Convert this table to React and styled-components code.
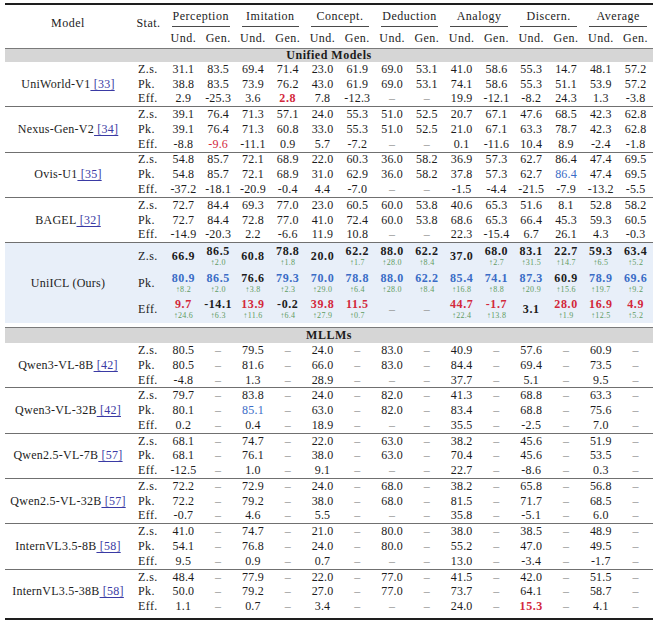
import React from 'react';
import styled, { createGlobalStyle } from 'styled-components';

const GlobalStyle = createGlobalStyle`
  html, body {
    margin: 0;
    padding: 0;
    background: #ffffff;
  }
  body {
    font-family: "Liberation Serif", "Times New Roman", serif;
    color: #1c1c1c;
  }
`;

const COLUMNS = '126px 35px repeat(14, 1fr)';
const ROW_H = 14.78;
const WIDE_ROW_H = 26.67;

const GROUPS = ['Perception', 'Imitation', 'Concept.', 'Deduction', 'Analogy', 'Discern.', 'Average'];
const STATS = ['Z.s.', 'Pk.', 'Eff.'];

const TONES = {
  b: '#3a6cc6',
  r: '#d3283b',
};

const Sheet = styled.div`
  width: 648px;
  margin: 3px 0 0 5px;
  border-top: 2px solid #1e1e1e;
  border-bottom: 2px solid #1e1e1e;
`;

const HeaderGrid = styled.div`
  display: grid;
  grid-template-columns: ${COLUMNS};
  grid-template-rows: 22px 21px;
  font-size: 12px;
  letter-spacing: 0.5px;
`;

const CornerLabel = styled.div`
  grid-row: 1 / 3;
  grid-column: ${p => p.$col};
  display: flex;
  align-items: center;
  justify-content: center;
  padding-bottom: 6px;
`;

const GroupLabel = styled.div`
  position: relative;
  grid-row: 1;
  grid-column: span 2;
  display: flex;
  align-items: center;
  justify-content: center;

  &::after {
    content: '';
    position: absolute;
    left: 6px;
    right: 6px;
    bottom: 0;
    height: 1px;
    background: #4a4a4a;
  }
`;

const SubLabel = styled.div`
  grid-row: 2;
  display: flex;
  align-items: center;
  justify-content: center;
  padding-top: 2px;
`;

const Band = styled.div`
  height: ${p => p.$h}px;
  border-top: 1px solid #7a7a7a;
  background: #d6d6d6;
  display: flex;
  align-items: center;
  justify-content: center;
  font-size: 12px;
  font-weight: 700;
  letter-spacing: 0.5px;
`;

const ModelGroup = styled.div`
  display: grid;
  grid-template-columns: ${COLUMNS};
  grid-template-rows: repeat(3, ${p => p.$rowH}px);
  background: ${p => (p.$highlight ? '#e8eff9' : 'transparent')};
  border-bottom: ${p => (p.$last ? 'none' : '1px solid #707070')};
  margin-bottom: ${p => (p.$last ? '4px' : '0')};
`;

const ModelName = styled.div`
  grid-column: 1;
  grid-row: 1 / 4;
  display: flex;
  align-items: center;
  justify-content: center;
  font-size: 12px;
  letter-spacing: 0.25px;
  white-space: nowrap;
`;

const Cite = styled.span`
  color: #3a3aa4;
  text-decoration: underline;
  text-decoration-thickness: 1px;
  text-underline-offset: 2px;
`;

const StatLabel = styled.div`
  grid-column: 2;
  display: flex;
  align-items: center;
  padding-left: 7px;
  font-size: 12px;
  letter-spacing: 0.4px;
`;

const Cell = styled.div`
  display: flex;
  flex-direction: column;
  align-items: center;
  justify-content: center;
  font-size: 12px;
`;

const Value = styled.span`
  line-height: 13px;
  color: ${p => (p.$dash ? '#8f8f8f' : p.$tone ? TONES[p.$tone] : '#1c1c1c')};
  font-weight: ${p => (p.$bold ? 700 : 400)};
  letter-spacing: ${p => (p.$bold ? '0.6px' : '0.2px')};
`;

const Delta = styled.span`
  font-size: 8px;
  line-height: 10px;
  color: #5f9b62;
  letter-spacing: 0.3px;
`;

// token: value[!x bold tone | ~x plain tone][^delta]
const parseCell = token => {
  const [main, delta] = token.split('^');
  const m = main.match(/^(.*?)([!~])([br])$/);
  if (m) return { text: m[1], tone: m[3], bold: m[2] === '!', delta };
  return { text: main, tone: null, bold: false, delta };
};

const undOnly = line =>
  line
    .split(' ')
    .map(v => `${v} -`)
    .join(' ');

const UNIFIED = [
  {
    name: 'UniWorld-V1',
    cite: '33',
    rows: [
      '31.1 83.5 69.4 71.4 23.0 61.9 69.0 53.1 41.0 58.6 55.3 14.7 48.1 57.2',
      '38.8 83.5 73.9 76.2 43.0 61.9 69.0 53.1 74.1 58.6 55.3 51.1 53.9 57.2',
      '2.9 -25.3 3.6 2.8!r 7.8 -12.3 - - 19.9 -12.1 -8.2 24.3 1.3 -3.8',
    ],
  },
  {
    name: 'Nexus-Gen-V2',
    cite: '34',
    rows: [
      '39.1 76.4 71.3 57.1 24.0 55.3 51.0 52.5 20.7 67.1 47.6 68.5 42.3 62.8',
      '39.1 76.4 71.3 60.8 33.0 55.3 51.0 52.5 21.0 67.1 63.3 78.7 42.3 62.8',
      '-8.8 -9.6~r -11.1 0.9 5.7 -7.2 - - 0.1 -11.6 10.4 8.9 -2.4 -1.8',
    ],
  },
  {
    name: 'Ovis-U1',
    cite: '35',
    rows: [
      '54.8 85.7 72.1 68.9 22.0 60.3 36.0 58.2 36.9 57.3 62.7 86.4 47.4 69.5',
      '54.8 85.7 72.1 68.9 31.0 62.9 36.0 58.2 37.8 57.3 62.7 86.4~b 47.4 69.5',
      '-37.2 -18.1 -20.9 -0.4 4.4 -7.0 - - -1.5 -4.4 -21.5 -7.9 -13.2 -5.5',
    ],
  },
  {
    name: 'BAGEL',
    cite: '32',
    rows: [
      '72.7 84.4 69.3 77.0 23.0 60.5 60.0 53.8 40.6 65.3 51.6 8.1 52.8 58.2',
      '72.7 84.4 72.8 77.0 41.0 72.4 60.0 53.8 68.6 65.3 66.4 45.3 59.3 60.5',
      '-14.9 -20.3 2.2 -6.6 11.9 10.8 - - 22.3 -15.4 6.7 26.1 4.3 -0.3',
    ],
  },
];

const OURS = {
  name: 'UniICL (Ours)',
  rows: [
    '66.9 86.5^2.0 60.8 78.8^1.8 20.0 62.2^1.7 88.0^28.0 62.2^8.4 37.0 68.0^2.7 83.1^31.5 22.7^14.7 59.3^6.5 63.4^5.2',
    '80.9!b^8.2 86.5!b^2.0 76.6^3.8 79.3!b^2.3 70.0!b^29.0 78.8!b^6.4 88.0!b^28.0 62.2!b^8.4 85.4!b^16.8 74.1!b^8.8 87.3!b^20.9 60.9^15.6 78.9!b^19.7 69.6!b^9.2',
    '9.7!r^24.6 -14.1^6.3 13.9!r^11.6 -0.2^6.4 39.8!r^27.9 11.5!r^0.7 - - 44.7!r^22.4 -1.7!r^13.8 3.1 28.0!r^1.9 16.9!r^12.5 4.9!r^5.2',
  ],
};

const MLLMS = [
  {
    name: 'Qwen3-VL-8B',
    cite: '42',
    rows: [
      '80.5 79.5 24.0 83.0 40.9 57.6 60.9',
      '80.5 81.6 66.0 83.0 84.4 69.4 73.5',
      '-4.8 1.3 28.9 - 37.7 5.1 9.5',
    ],
  },
  {
    name: 'Qwen3-VL-32B',
    cite: '42',
    rows: [
      '79.7 83.8 24.0 82.0 41.3 68.8 63.3',
      '80.1 85.1~b 63.0 82.0 83.4 68.8 75.6',
      '0.2 0.4 18.9 - 35.5 -2.5 7.0',
    ],
  },
  {
    name: 'Qwen2.5-VL-7B',
    cite: '57',
    rows: [
      '68.1 74.7 22.0 63.0 38.2 45.6 51.9',
      '68.1 76.1 38.0 63.0 70.4 45.6 53.5',
      '-12.5 1.0 9.1 - 22.7 -8.6 0.3',
    ],
  },
  {
    name: 'Qwen2.5-VL-32B',
    cite: '57',
    rows: [
      '72.2 72.9 24.0 68.0 38.2 65.8 56.8',
      '72.2 79.2 38.0 68.0 81.5 71.7 68.5',
      '-0.7 4.6 5.5 - 35.8 -5.1 6.0',
    ],
  },
  {
    name: 'InternVL3.5-8B',
    cite: '58',
    rows: [
      '41.0 74.7 21.0 80.0 38.0 38.5 48.9',
      '54.1 76.8 24.0 80.0 55.2 47.0 49.5',
      '9.5 0.9 0.7 - 13.0 -3.4 -1.7',
    ],
  },
  {
    name: 'InternVL3.5-38B',
    cite: '58',
    rows: [
      '48.4 77.9 22.0 77.0 41.5 42.0 51.5',
      '50.0 79.2 27.0 77.0 73.7 64.1 58.7',
      '1.1 0.7 3.4 - 24.0 15.3!r 4.1',
    ],
  },
].map(m => ({ ...m, rows: m.rows.map(undOnly) }));

const DataCell = ({ token, strong }) => {
  const cell = parseCell(token);
  const dash = cell.text === '-';
  return (
    <Cell>
      <Value $dash={dash} $tone={cell.tone} $bold={!dash && (cell.bold || strong)}>
        {dash ? '\u2013' : cell.text}
      </Value>
      {cell.delta && <Delta>{'\u2191' + cell.delta}</Delta>}
    </Cell>
  );
};

const Group = ({ model, last, highlight }) => (
  <ModelGroup $rowH={highlight ? WIDE_ROW_H : ROW_H} $last={last} $highlight={highlight}>
    <ModelName>
      {model.name}
      {model.cite && <Cite>{'\u00a0[' + model.cite + ']'}</Cite>}
    </ModelName>
    {model.rows.map((line, r) => (
      <React.Fragment key={r}>
        <StatLabel>{STATS[r]}</StatLabel>
        {line.split(' ').map((token, c) => (
          <DataCell key={c} token={token} strong={highlight} />
        ))}
      </React.Fragment>
    ))}
  </ModelGroup>
);

const App = () => (
  <>
    <GlobalStyle />
    <Sheet>
      <HeaderGrid>
        <CornerLabel $col={1}>Model</CornerLabel>
        <CornerLabel $col={2}>Stat.</CornerLabel>
        {GROUPS.map(g => (
          <GroupLabel key={g}>{g}</GroupLabel>
        ))}
        {GROUPS.map(g => (
          <React.Fragment key={g}>
            <SubLabel>Und.</SubLabel>
            <SubLabel>Gen.</SubLabel>
          </React.Fragment>
        ))}
      </HeaderGrid>

      <Band $h={13}>Unified Models</Band>
      {UNIFIED.map(m => (
        <Group key={m.name} model={m} />
      ))}
      <Group model={OURS} highlight last />

      <Band $h={15}>MLLMs</Band>
      {MLLMS.map((m, i) => (
        <Group key={m.name} model={m} last={i === MLLMS.length - 1} />
      ))}
    </Sheet>
  </>
);

export default App;
